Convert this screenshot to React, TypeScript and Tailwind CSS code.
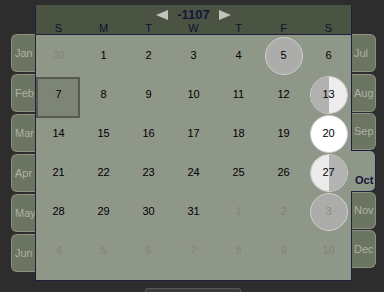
import React from "react";

type Cell = { n: number; out?: boolean; kind?: "full" | "half-r" | "half-l" | "white" | "gray" | "sel" };

const rows: Cell[][] = [
  [{ n: 30, out: true }, { n: 1 }, { n: 2 }, { n: 3 }, { n: 4 }, { n: 5, kind: "full" }, { n: 6 }],
  [{ n: 7, kind: "sel" }, { n: 8 }, { n: 9 }, { n: 10 }, { n: 11 }, { n: 12 }, { n: 13, kind: "half-r" }],
  [{ n: 14 }, { n: 15 }, { n: 16 }, { n: 17 }, { n: 18 }, { n: 19 }, { n: 20, kind: "white" }],
  [{ n: 21 }, { n: 22 }, { n: 23 }, { n: 24 }, { n: 25 }, { n: 26 }, { n: 27, kind: "half-l" }],
  [{ n: 28 }, { n: 29 }, { n: 30 }, { n: 31 }, { n: 1, out: true }, { n: 2, out: true }, { n: 3, out: true, kind: "gray" }],
  [{ n: 4, out: true }, { n: 5, out: true }, { n: 6, out: true }, { n: 7, out: true }, { n: 8, out: true }, { n: 9, out: true }, { n: 10, out: true }],
];

const days = ["S", "M", "T", "W", "T", "F", "S"];

function Circle({ kind }: { kind: Cell["kind"] }) {
  const base =
    "absolute left-1/2 top-1/2 -translate-x-1/2 -translate-y-1/2 w-[38px] h-[38px] rounded-full border border-[#cfcfcf] overflow-hidden flex";
  if (kind === "full" || kind === "gray") return <div className={base + " bg-[#acacaa]"} />;
  if (kind === "white") return <div className={base + " bg-white"} />;
  if (kind === "half-r")
    return (
      <div className={base}>
        <div className="flex-1 bg-[#b1b1af]" />
        <div className="flex-1 bg-[#ededed]" />
      </div>
    );
  if (kind === "half-l")
    return (
      <div className={base}>
        <div className="flex-1 bg-[#ebebeb]" />
        <div className="flex-1 bg-[#b3b3b1]" />
      </div>
    );
  return null;
}

function LeftTab({ label }: { label: string }) {
  return (
    <div className="h-[38px] w-[24px] bg-[#6c7462] border border-r-0 border-[#8b9285] rounded-l-[6px] flex items-center pl-[3px] text-[11px] text-[#acb3a6] leading-none">
      {label}
    </div>
  );
}

function RightTab({ label, cls }: { label: string; cls: string }) {
  return (
    <div
      className={
        "w-[24px] bg-[#6c7462] border border-l-0 border-[#8b9285] rounded-r-[6px] flex items-center pl-[2px] text-[11px] text-[#acb3a6] leading-none " +
        cls
      }
    >
      {label}
    </div>
  );
}

export default function App() {
  return (
    <div
      className="w-[384px] h-[292px] bg-[#2d2d2d] overflow-hidden"
      style={{ fontFamily: '"Liberation Sans", Arial, sans-serif' }}
    >
      <div className="flex pl-[11px] pt-[5px]">
        <div className="flex flex-col gap-[2px] mt-[29px] w-[24px]">
          {["Jan", "Feb", "Mar", "Apr", "May", "Jun"].map((m) => (
            <LeftTab key={m} label={m} />
          ))}
        </div>
        <div className="w-[317px] h-[276px] border-x border-b border-[#1d2038] bg-[#8f9789] flex flex-col">
          <div className="h-[30px] bg-[#4b5342] border-b border-[#1d2038] flex flex-col">
            <div className="h-[18px] flex items-center justify-center gap-[9px] pt-[1px]">
              <svg width="12" height="10" viewBox="0 0 12 10">
                <polygon points="12,0 12,10 0,5" fill="#c2c4c0" />
              </svg>
              <span className="text-[13px] font-bold text-[#14163e] leading-none">-1107</span>
              <svg width="12" height="10" viewBox="0 0 12 10">
                <polygon points="0,0 0,10 12,5" fill="#c2c4c0" />
              </svg>
            </div>
            <div className="grid grid-cols-7 h-[11px]">
              {days.map((d, i) => (
                <div key={i} className="text-center text-[11px] leading-[11px] text-[#0e1132]">
                  {d}
                </div>
              ))}
            </div>
          </div>
          <div className="grid grid-cols-7 grid-rows-[repeat(6,39px)] pt-[1px]">
            {rows.flat().map((c, i) => (
              <div key={i} className="relative flex items-center justify-center">
                {c.kind === "sel" && (
                  <div className="absolute left-0 top-[2px] w-[44px] h-[41px] bg-[#7d8577] border-2 border-[#555b51]" />
                )}
                {c.kind && c.kind !== "sel" && <Circle kind={c.kind} />}
                <span
                  className={
                    "relative text-[11px] leading-none " +
                    (c.kind === "gray" ? "text-[#8a8a88]" : c.out ? "text-[#80857d]" : "text-black")
                  }
                >
                  {c.n}
                </span>
              </div>
            ))}
          </div>
        </div>
        <div className="flex flex-col mt-[29px] w-[24px]">
          <RightTab label="Jul" cls="h-[38px]" />
          <RightTab label="Aug" cls="h-[38px] mt-[2px]" />
          <RightTab label="Sep" cls="h-[37px] mt-[1px]" />
          <div className="h-[42px] w-[25px] -ml-[1px] bg-[#8f9789] border border-l-0 border-[#1d2038] rounded-r-[6px] pl-[4px] pt-[24px] text-[11px] font-bold text-[#14163e] leading-none">
            Oct
          </div>
          <RightTab label="Nov" cls="h-[37px]" />
          <RightTab label="Dec" cls="h-[38px] mt-[1px]" />
        </div>
      </div>
      <div className="ml-[145px] mt-[7px] w-[96px] h-[10px] bg-[#3a3a3a] border-t border-x border-[#585858] rounded-t-[3px]" />
    </div>
  );
}
